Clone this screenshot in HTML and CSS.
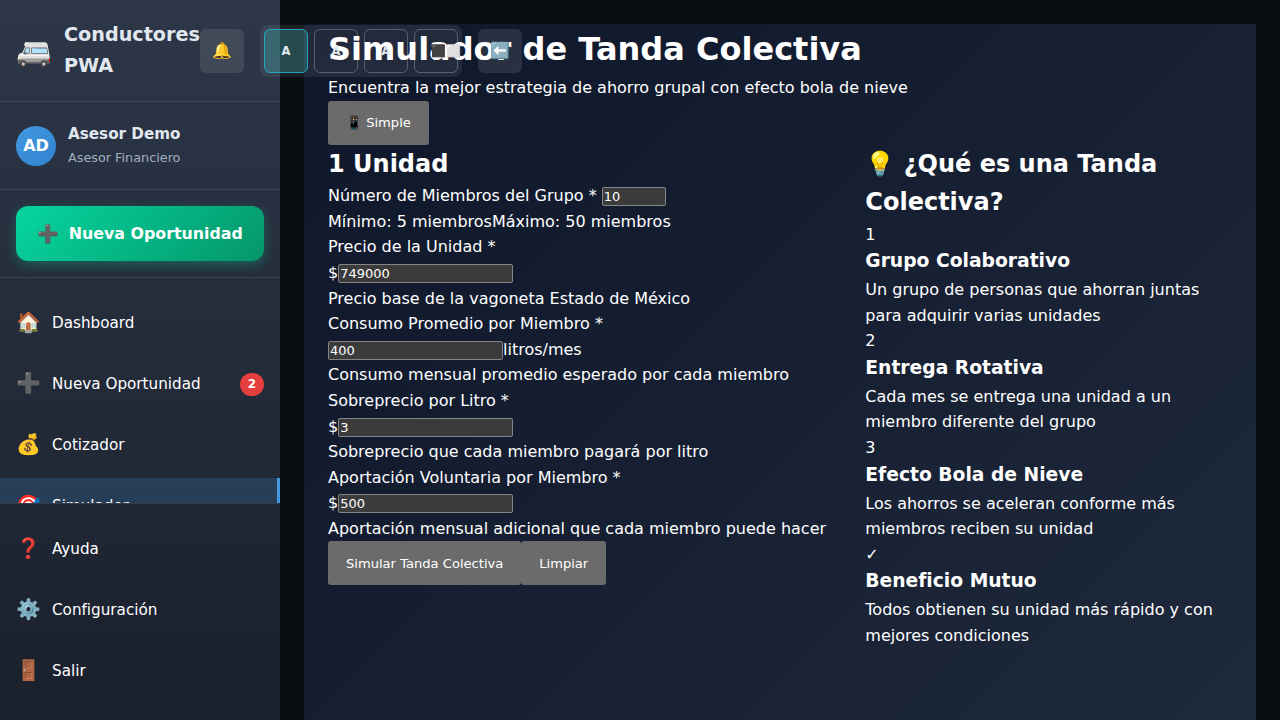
FILE: index.html
```html
<!DOCTYPE html>
<html lang="es">
<head>
<meta charset="utf-8">
<title>Conductores PWA</title>
<link rel="stylesheet" href="styles.css">
</head>
<body>
<div class="app">
  <aside class="sidebar">
    <header class="brand">
      <span class="brand-icon">🚐</span>
      <span class="brand-name">Conductores PWA</span>
      <div class="actions">
        <button class="action">🔔</button>
        <div class="sizes">
          <button class="size active">A</button>
          <button class="size">A</button>
          <button class="size">A</button>
          <button class="size contrast">⬛⬜</button>
        </div>
        <button class="action">⬅️</button>
      </div>
    </header>
    <section class="user">
      <div class="avatar">AD</div>
      <div>
        <div class="user-name">Asesor Demo</div>
        <div class="user-role">Asesor Financiero</div>
      </div>
    </section>
    <section class="cta-wrap">
      <button class="cta"><span class="cta-icon">➕</span>Nueva Oportunidad</button>
    </section>
    <nav class="nav">
      <a class="item"><span class="item-icon">🏠</span>Dashboard</a>
      <a class="item"><span class="item-icon">➕</span>Nueva Oportunidad<span class="badge">2</span></a>
      <a class="item"><span class="item-icon">💰</span>Cotizador</a>
      <a class="item current"><span class="item-icon">🎯</span>Simulador</a>
    </nav>
    <footer class="side-footer">
      <a class="item"><span class="item-icon">❓</span>Ayuda</a>
      <a class="item"><span class="item-icon">⚙️</span>Configuración</a>
      <a class="item"><span class="item-icon">🚪</span>Salir</a>
    </footer>
  </aside>
  <main class="main">
    <div class="page">
      <h1>Simulador de Tanda Colectiva</h1>
      <p>Encuentra la mejor estrategia de ahorro grupal con efecto bola de nieve</p>
      <button class="btn">📱 Simple</button>
      <div class="columns">
        <section>
          <h2>1 Unidad</h2>
          <div class="row"><label>Número de Miembros del Grupo *</label>&nbsp;<input class="short" value="10"></div>
          <div class="row"><span>Mínimo: 5 miembros</span><span>Máximo: 50 miembros</span></div>
          <div class="row"><label>Precio de la Unidad *</label></div>
          <div class="row"><span>$</span><input value="749000"></div>
          <div class="row">Precio base de la vagoneta Estado de México</div>
          <div class="row"><label>Consumo Promedio por Miembro *</label></div>
          <div class="row"><input value="400"><span>litros/mes</span></div>
          <div class="row">Consumo mensual promedio esperado por cada miembro</div>
          <div class="row"><label>Sobreprecio por Litro *</label></div>
          <div class="row"><span>$</span><input value="3"></div>
          <div class="row">Sobreprecio que cada miembro pagará por litro</div>
          <div class="row"><label>Aportación Voluntaria por Miembro *</label></div>
          <div class="row"><span>$</span><input value="500"></div>
          <div class="row">Aportación mensual adicional que cada miembro puede hacer</div>
          <div class="buttons"><button class="btn">Simular Tanda Colectiva</button><button class="btn">Limpiar</button></div>
        </section>
        <section>
          <h2>💡 ¿Qué es una Tanda Colectiva?</h2>
          <div>1</div>
          <h3>Grupo Colaborativo</h3>
          <p>Un grupo de personas que ahorran juntas para adquirir varias unidades</p>
          <div>2</div>
          <h3>Entrega Rotativa</h3>
          <p>Cada mes se entrega una unidad a un miembro diferente del grupo</p>
          <div>3</div>
          <h3>Efecto Bola de Nieve</h3>
          <p>Los ahorros se aceleran conforme más miembros reciben su unidad</p>
          <div>✓</div>
          <h3>Beneficio Mutuo</h3>
          <p>Todos obtienen su unidad más rápido y con mejores condiciones</p>
        </section>
      </div>
    </div>
  </main>
</div>
</body>
</html>
```
FILE: styles.css
```css
* { box-sizing: border-box; margin: 0; padding: 0; }
body {
  font-family: "DejaVu Sans", sans-serif;
  font-size: 16px;
  line-height: 1.6;
  color: #fff;
  background: #0a0d12;
  overflow: hidden;
}
button, input { font-family: inherit; }
button { border: 0; }
.app { display: flex; height: 100vh; }

.sidebar {
  position: relative;
  z-index: 2;
  flex: none;
  width: 280px;
  height: 100vh;
  display: flex;
  flex-direction: column;
  background: linear-gradient(180deg, #2d3748 0%, #1a202c 100%);
}
.brand {
  display: flex;
  align-items: center;
  flex: none;
  padding: 20px 16px;
  border-bottom: 1px solid rgba(255, 255, 255, 0.1);
}
.brand-icon { flex: none; width: 36px; margin-right: 12px; font-size: 28.8px; line-height: 46px; }
.brand-name { flex: none; width: 136px; font-size: 19.2px; font-weight: 700; line-height: 30.7px; color: #e2e8f0; }
.actions { flex: none; display: flex; align-items: center; gap: 16px; }
.action {
  width: 44px;
  height: 44px;
  border-radius: 6px;
  background: rgba(255, 255, 255, 0.1);
  color: #e2e8f0;
  font-size: 16px;
}
.sizes {
  display: flex;
  gap: 6px;
  padding: 4px;
  border-radius: 8px;
  background: rgba(255, 255, 255, 0.08);
}
.size {
  width: 44px;
  height: 44px;
  border: 1px solid rgba(255, 255, 255, 0.25);
  border-radius: 6px;
  background: transparent;
  color: #e2e8f0;
  font-size: 11.6px;
  font-weight: 700;
}
.size.active { border-color: #22a7c0; background: rgba(56, 178, 172, 0.3); }
.size.contrast { white-space: nowrap; padding-left: 16px; font-size: 12px; }

.user {
  display: flex;
  align-items: center;
  flex: none;
  gap: 12px;
  padding: 20px 16px;
  border-bottom: 1px solid rgba(255, 255, 255, 0.1);
}
.avatar {
  width: 40px;
  height: 40px;
  border-radius: 50%;
  background: linear-gradient(135deg, #4299e1, #3182ce);
  font-weight: 700;
  line-height: 40px;
  text-align: center;
}
.user-name { margin-bottom: 2px; font-size: 15.2px; font-weight: 700; color: #e2e8f0; }
.user-role { margin-top: -1px; padding-bottom: 1px; font-size: 12.8px; color: #a0aec0; }
.cta-wrap { flex: none; padding: 16px; border-bottom: 1px solid rgba(255, 255, 255, 0.1); }
.cta {
  display: flex;
  align-items: center;
  justify-content: center;
  gap: 9.6px;
  width: 100%;
  height: 55px;
  border-radius: 12px;
  background: linear-gradient(135deg, #06d6a0, #059669);
  box-shadow: 0 4px 12px rgba(6, 214, 160, 0.3);
  color: #fff;
  font-size: 15.84px;
  font-weight: 700;
}
.cta-icon { font-size: 17.6px; }

.nav { flex: 1 1 0; min-height: 0; padding: 16px 0; overflow: hidden; }
.item {
  display: flex;
  align-items: center;
  gap: 12px;
  height: 57.3px;
  margin-bottom: 4px;
  padding: 0 16px;
  font-size: 15.2px;
}
.item-icon { flex: none; width: 24px; padding-bottom: 2px; font-size: 20px; text-align: center; }
.current { padding-right: 13px; padding-bottom: 2px; border-right: 3px solid #4299e1; background: rgba(66, 153, 225, 0.2); }
.badge {
  min-width: 24px;
  height: 23px;
  margin-left: auto;
  border-radius: 12px;
  background: #e53e3e;
  font-size: 12px;
  font-weight: 700;
  line-height: 23px;
  text-align: center;
}
.side-footer { flex: none; padding: 16px 0; border-top: 1px solid rgba(255, 255, 255, 0.1); }

.main { flex: 1; min-width: 0; padding: 24px 24px 0; }
.page {
  height: 100%;
  padding: 0 24px;
  background: linear-gradient(135deg, #0f172a 0%, #1e293b 100%);
}
h1 { font-size: 32px; }
h2 { font-size: 24px; }
h3 { padding-bottom: 1.95px; font-size: 18.72px; line-height: 28px; }
.btn {
  display: block;
  height: 44px;
  padding: 0 18px;
  border-radius: 3px;
  background: #6b6b6b;
  color: #fff;
  font-size: 13.08px;
}
.columns { display: grid; grid-template-columns: 537.3px 1fr; }
.row { display: flex; align-items: center; height: 25.6px; white-space: nowrap; }
.row input {
  width: 175px;
  height: 19px;
  margin-top: 1.5px;
  padding: 1px;
  border: 1px solid #858585;
  border-radius: 2px;
  background: #3b3b3b;
  color: #fff;
  font-size: 13px;
}
.row input.short { width: 64px; }
.buttons { display: flex; }
```
